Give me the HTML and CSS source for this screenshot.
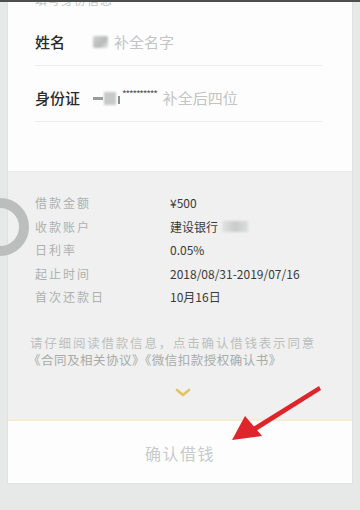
FILE: index.html
```html
<!DOCTYPE html>
<html lang="zh-CN">
<head>
<meta charset="utf-8">
<title>确认借钱</title>
<link rel="stylesheet" href="styles.css">
</head>
<body>
<div class="topbar"></div>
<main class="card">
  <section class="identity">
    <div class="heading">填写身份信息</div>
    <div class="field">
      <span class="field-label">姓名</span>
      <span class="blur-icon"></span>
      <span class="placeholder">补全名字</span>
    </div>
    <div class="field">
      <span class="field-label">身份证</span>
      <span class="id-dash"></span><span class="blur-block"></span><span class="id-mark"></span><span class="stars">**********</span>
      <span class="placeholder ph-id">补全后四位</span>
    </div>
  </section>
  <section class="details">
    <dl class="info">
      <div class="info-row"><dt>借款金额</dt><dd>¥500</dd></div>
      <div class="info-row"><dt>收款账户</dt><dd>建设银行<span class="blur-bank"></span></dd></div>
      <div class="info-row"><dt>日利率</dt><dd>0.05%</dd></div>
      <div class="info-row"><dt>起止时间</dt><dd>2018/08/31-2019/07/16</dd></div>
      <div class="info-row"><dt>首次还款日</dt><dd>10月16日</dd></div>
    </dl>
    <p class="notice">请仔细阅读借款信息，点击确认借钱表示同意</p>
    <p class="notice-links">《合同及相关协议》《微信扣款授权确认书》</p>
    <div class="chevron">
      <svg width="16" height="9" viewBox="0 0 16 9"><path d="M2 2 L8 7 L14 2" fill="none" stroke="#e2c462" stroke-width="2.6" stroke-linecap="round" stroke-linejoin="round"/></svg>
    </div>
  </section>
  <section class="confirm">
    <button class="confirm-btn" type="button">确认借钱</button>
  </section>
</main>
<div class="spinner"></div>
<svg class="arrow" width="360" height="510" viewBox="0 0 360 510">
  <path d="M319 386 L321 390 L256 431 L253 427 Z" fill="#e0242b"/>
  <path d="M245 416 L262 436 L232 440 Z" fill="#e0242b"/>
</svg>
</body>
</html>
```
FILE: styles.css
```css
html, body {
  margin: 0;
  padding: 0;
}
body {
  background: #e7e9e8;
  font-family: "Noto Sans CJK SC", "Noto Sans", sans-serif;
  width: 360px;
  height: 510px;
  overflow: hidden;
  position: relative;
}
.topbar {
  position: absolute;
  left: 0;
  top: 0;
  width: 360px;
  height: 2px;
  background: #4d4f4e;
  z-index: 3;
}
.card {
  margin: 0 8px;
  background: #fcfdfc;
  box-shadow: 0 0 0 1px #e0e2e1;
}
.identity {
  padding: 0 30px 49px 27px;
  background: #fcfdfc;
}
.heading {
  height: 14px;
  font-size: 12px;
  line-height: 12px;
  margin-top: -4px;
  color: #c4c6c5;
  letter-spacing: 1px;
  position: relative;
  top: -2px;
}
.field {
  display: flex;
  align-items: center;
  padding: 24px 0 15px;
  height: 16px;
  border-bottom: 1px solid #eceeed;
  font-size: 15px;
  line-height: 16px;
}
.field-label {
  width: 58px;
  color: #2a2a2a;
  font-weight: 500;
}
.placeholder {
  color: #c3c4c4;
  font-size: 15px;
  margin-left: 6px;
}
.blur-icon {
  width: 15px;
  height: 12px;
  background: linear-gradient(135deg, #d0d2d1 0%, #b8bab9 60%, #e6e8e7 100%);
  filter: blur(1px);
  border-radius: 2px;
}
.id-dash {
  width: 10px;
  height: 3px;
  background: #9a9c9b;
  filter: blur(0.5px);
}
.blur-block {
  width: 12px;
  height: 13px;
  background: #c8cac9;
  filter: blur(1.2px);
  margin-left: 1px;
}
.id-mark {
  width: 2px;
  height: 8px;
  background: #8a8c8b;
  margin-left: 2px;
  margin-top: 4px;
}
.stars {
  font-size: 10px;
  color: #555;
  letter-spacing: -1.2px;
  align-self: flex-start;
  margin-top: -2px;
  margin-left: 2px;
  line-height: 12px;
}
.details {
  background: #eff0ef;
  border-top: 1px solid #eaecea;
  padding: 19px 0 22px;
}
.info {
  margin: 0;
  padding: 0 0 0 27px;
}
.info-row {
  display: flex;
  line-height: 23.5px;
  height: 23.5px;
  font-size: 12px;
}
.info-row dt {
  width: 135px;
  color: #aeb0af;
  letter-spacing: 2px;
}
.info-row dd {
  margin: 0;
  color: #3a3a3a;
  display: flex;
  align-items: center;
}
.blur-bank {
  width: 26px;
  height: 11px;
  margin-left: 4px;
  background: linear-gradient(90deg, #e2e4e3, #c9cbca 50%, #dcdedd);
  filter: blur(1.2px);
}
.notice,
.notice-links {
  margin: 0;
  font-size: 12.5px;
  line-height: 17px;
  height: 17px;
  white-space: nowrap;
}
.notice {
  margin-top: 25px;
  padding-left: 22px;
  color: #bdbfbe;
  letter-spacing: 1.8px;
}
.notice-links {
  padding-left: 20px;
  color: #a9abaa;
  letter-spacing: 0.5px;
}
.chevron {
  display: flex;
  justify-content: center;
  margin-top: 20px;
  height: 9px;
  padding-left: 6px;
}
.chevron svg {
  display: block;
}
.confirm {
  border-top: 2px solid #f5ecd2;
  height: 62px;
  display: flex;
  align-items: center;
  justify-content: center;
  background: #fcfdfc;
}
.confirm-btn {
  border: 0;
  background: transparent;
  font-family: inherit;
  font-size: 16px;
  letter-spacing: 1.5px;
  color: #c9cbca;
  padding: 0;
  margin-top: 2px;
}
.spinner {
  position: absolute;
  left: -29px;
  top: 198px;
  width: 38px;
  height: 38px;
  border: 10px solid #bcbebd;
  border-radius: 50%;
  z-index: 2;
}
.arrow {
  position: absolute;
  left: 0;
  top: 0;
  z-index: 4;
  pointer-events: none;
}
```
